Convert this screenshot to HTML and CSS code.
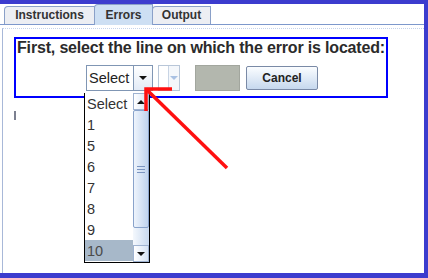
FILE: index.html
```html
<!DOCTYPE html>
<html>

<head>
    <link rel="stylesheet" href="styles.css">
</head>

<body>
    <div class="frame">
        <div class="window">
            <div class="tabs">
                <div class="tab tab-wide">Instructions</div>
                <div class="tab tab-on">Errors</div>
                <div class="tab">Output</div>
            </div>
            <div class="panel">
                <div class="prompt">
                    <h1 class="title">First, select the line on which the error is located:</h1>
                    <div class="controls">
                        <div class="combo">
                            <span class="combo-text">Select</span>
                            <span class="combo-btn"><span class="tri"></span></span>
                        </div>
                        <div class="combo combo-off">
                            <span class="combo-text"></span>
                            <span class="combo-btn"><span class="tri tri-off"></span></span>
                        </div>
                        <div class="blank"></div>
                        <button type="button" class="cancel">Cancel</button>
                    </div>
                </div>
                <div class="mark"></div>
            </div>
        </div>

        <!-- open dropdown of the first combo -->
        <div class="popup">
            <div class="items">
                <div class="item">Select</div>
                <div class="item">1</div>
                <div class="item">5</div>
                <div class="item">6</div>
                <div class="item">7</div>
                <div class="item">8</div>
                <div class="item">9</div>
                <div class="item item-sel">10</div>
            </div>
            <div class="scrollbar">
                <div class="sb-btn"><span class="tri tri-up"></span></div>
                <div class="sb-thumb"><span class="grip"></span></div>
                <div class="sb-track"></div>
                <div class="sb-btn"><span class="tri"></span></div>
            </div>
        </div>

        <svg class="arrow" width="428" height="278" viewBox="0 0 428 278">
            <polyline points="172,89 146,89 146,111" fill="none" stroke="#ff1010" stroke-width="3.5" />
            <line x1="146" y1="89" x2="227" y2="168" stroke="#ff1010" stroke-width="3.5" />
        </svg>
    </div>
</body>

</html>
```

FILE: styles.css
```css
body {
    margin: 0;
    font-family: "Liberation Sans", Arial, sans-serif;
}

.frame {
    position: relative;
    width: 428px;
    height: 278px;
    box-sizing: border-box;
    padding: 4px 4px 5px 0;
    background-color: #3c3cce;
}

.window {
    height: 100%;
    background-color: white;
    display: flex;
    flex-direction: column;
}

/* tab strip */
.tabs {
    height: 20px;
    display: flex;
    align-items: flex-end;
    padding-left: 4px;
    border-bottom: 1px solid #7d98cc;
}

.tab {
    width: 57px;
    height: 17px;
    margin-right: -1px;
    border: 1px solid #8aa0c8;
    border-bottom: none;
    border-radius: 4px 0 0 0;
    background-color: #eceef3;
    color: #333;
    font-size: 12px;
    font-weight: bold;
    line-height: 17px;
    text-align: center;
}

.tab-wide {
    width: 89px;
}

.tab-on {
    height: 20px;
    margin-bottom: -1px;
    line-height: 21px;
    background-color: #cddff3;
}

.panel {
    flex: 1;
    margin: 3px 0 0 2px;
    border-top: 1px dotted #c4d3ec;
    border-left: 1px solid #a8b8d8;
    padding: 8px 0 0 11px;
}

/* blue prompt box */
.prompt {
    width: 374px;
    height: 61px;
    box-sizing: border-box;
    border: 2px solid #0000ff;
}

.title {
    margin: 0;
    color: #2b2b2b;
    font-size: 16px;
    line-height: 18px;
    letter-spacing: -0.17px;
    text-align: center;
}

.controls {
    margin-top: 8px;
    display: flex;
    align-items: center;
    justify-content: center;
    padding-left: 2px;
}

.combo {
    width: 67px;
    height: 26px;
    box-sizing: border-box;
    border: 1px solid #8096b4;
    display: flex;
    background-color: white;
}

.combo-text {
    flex: 1;
    padding-left: 2px;
    color: #222;
    font-size: 14.5px;
    line-height: 25px;
}

.combo-btn {
    width: 18px;
    border-left: 1px solid #8096b4;
    background: linear-gradient(#ffffff, #e2eaf6);
    display: flex;
    align-items: center;
    justify-content: center;
}

.tri {
    width: 0;
    height: 0;
    border-left: 4px solid transparent;
    border-right: 4px solid transparent;
    border-top: 4px solid #111;
}

.tri-up {
    border-top: none;
    border-bottom: 4px solid #111;
}

.combo-off {
    width: 22px;
    margin-left: 5px;
    border-color: #b8c6d8;
}

.combo-off .combo-btn {
    width: 10px;
    border-left-color: #c8d4e4;
    background: #f4f7fb;
}

.tri-off {
    border-top-color: #a9c1e3;
}

.blank {
    width: 45px;
    height: 26px;
    margin-left: 15px;
    box-sizing: border-box;
    border: 1px solid #a2a69e;
    background-color: #b3b7ae;
}

.cancel {
    width: 72px;
    height: 24px;
    margin-left: 6px;
    padding: 0;
    border: 1px solid #7a8aa6;
    border-radius: 2px;
    background: linear-gradient(#fbfdff, #c6d8ee);
    color: #222;
    font-family: "Liberation Sans", Arial, sans-serif;
    font-size: 12px;
    font-weight: bold;
}

.mark {
    width: 2px;
    height: 9px;
    margin-top: 13px;
    background-color: #7c8090;
}

/* dropdown popup */
.popup {
    position: absolute;
    left: 84px;
    top: 93px;
    width: 66px;
    height: 170px;
    box-sizing: border-box;
    border: 1px solid #000;
    border-top: none;
    background-color: white;
    display: flex;
}

.items {
    flex: 1;
}

.item {
    height: 21px;
    padding-left: 2px;
    color: #333;
    font-size: 14.5px;
    line-height: 23px;
}

.item-sel {
    background-color: #a7b8c9;
    color: #4a4a4a;
}

.scrollbar {
    width: 16px;
    display: flex;
    flex-direction: column;
    background: linear-gradient(to right, #f4f8fd, #c8d9ef);
}

.sb-btn {
    height: 17px;
    box-sizing: border-box;
    border: 1px solid #9fb3d1;
    background: linear-gradient(to right, #ffffff, #d6e3f4);
    display: flex;
    align-items: center;
    justify-content: center;
}

.sb-thumb {
    height: 118px;
    box-sizing: border-box;
    border: 1px solid #89a3cb;
    border-radius: 2px;
    background: linear-gradient(to right, #eef4fc, #bfd3ee);
    display: flex;
    align-items: center;
    justify-content: center;
}

.grip {
    width: 8px;
    height: 5px;
    border-top: 1px solid #7a94c0;
    border-bottom: 1px solid #7a94c0;
    background: linear-gradient(transparent 2px, #7a94c0 2px, #7a94c0 3px, transparent 3px);
}

.sb-track {
    flex: 1;
}

.arrow {
    position: absolute;
    left: 0;
    top: 0;
}
```
